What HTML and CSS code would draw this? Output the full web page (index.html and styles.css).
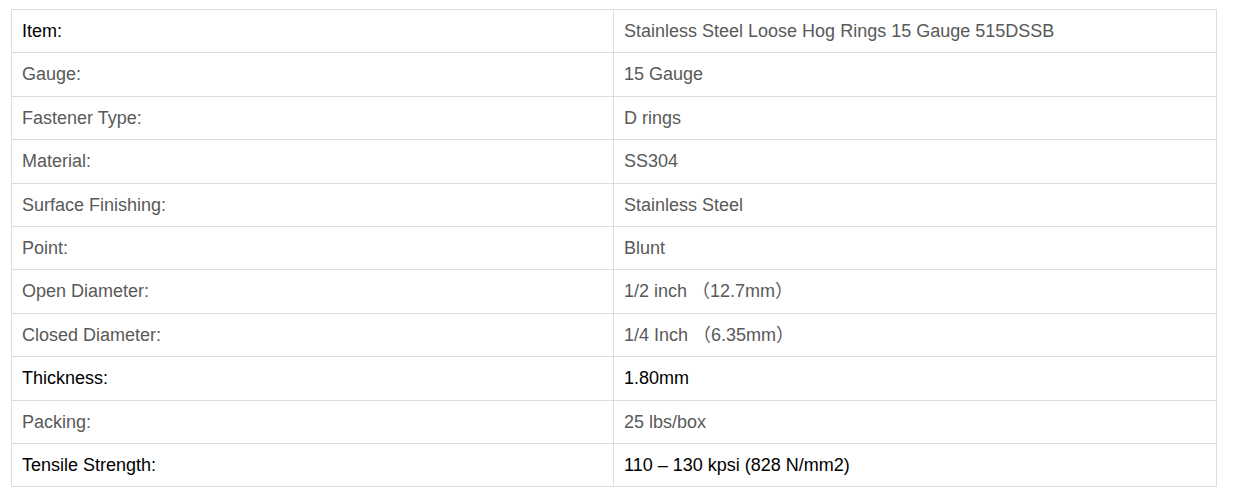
FILE: index.html
```html
<!DOCTYPE html>
<html lang="en">
<head>
<meta charset="utf-8">
<title>Specifications</title>
<link rel="stylesheet" href="styles.css">
</head>
<body>
<table class="spec">
  <tbody>
    <tr><td class="dark">Item:</td><td>Stainless Steel Loose Hog Rings 15 Gauge 515DSSB</td></tr>
    <tr><td>Gauge:</td><td>15 Gauge</td></tr>
    <tr><td>Fastener Type:</td><td>D rings</td></tr>
    <tr><td>Material:</td><td>SS304</td></tr>
    <tr><td>Surface Finishing:</td><td>Stainless Steel</td></tr>
    <tr><td>Point:</td><td>Blunt</td></tr>
    <tr><td>Open Diameter:</td><td>1/2 inch （12.7mm）</td></tr>
    <tr><td>Closed Diameter:</td><td>1/4 Inch （6.35mm）</td></tr>
    <tr><td class="dark">Thickness:</td><td class="dark">1.80mm</td></tr>
    <tr><td>Packing:</td><td>25 lbs/box</td></tr>
    <tr><td class="dark">Tensile Strength:</td><td class="dark">110 – 130 kpsi (828 N/mm2)</td></tr>
  </tbody>
</table>
</body>
</html>
```
FILE: styles.css
```css
html, body {
  background: #ffffff;
}
body {
  margin: 0;
  padding: 9px 19px 0 11px;
  font-family: "Liberation Sans", Arial, "Noto Sans CJK SC", sans-serif;
  font-size: 18px;
  color: #595959;
}
.spec {
  width: 1206px;
  border-collapse: collapse;
  table-layout: fixed;
}
.spec td {
  border: 1px solid #dddddd;
  padding: 10px 10px;
  line-height: 22.4px;
  text-align: left;
  vertical-align: middle;
}
.spec td:first-child {
  width: 581px;
}
.spec td.dark {
  color: #000000;
}
```
